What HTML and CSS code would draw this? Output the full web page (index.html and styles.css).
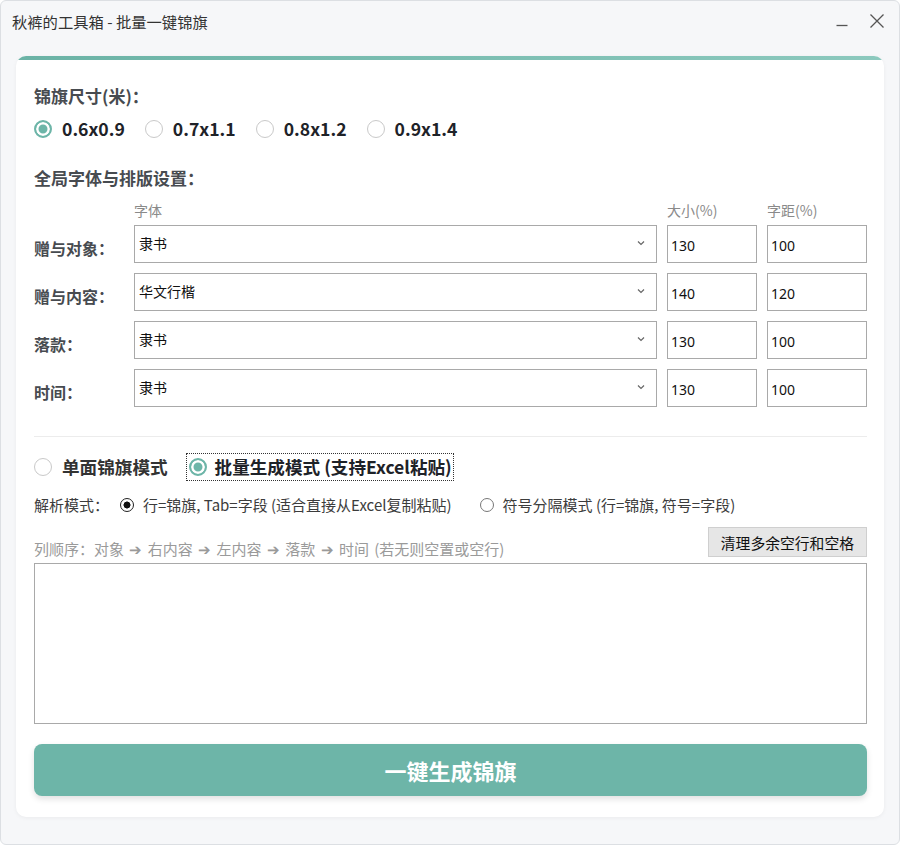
FILE: index.html
```html
<!DOCTYPE html>
<html lang="zh-CN">
<head>
    <meta charset="UTF-8">
    <meta name="viewport" content="width=device-width, initial-scale=1.0">
    <title>秋裤的工具箱 - 批量一键锦旗</title>
    <link rel="stylesheet" href="styles.css">
</head>
<body>
    <div class="window">
        <div class="titlebar">
            <span class="title">秋裤的工具箱 - 批量一键锦旗</span>
            <div class="win-btns">
                <svg class="win-btn" width="14" height="14" viewBox="0 0 14 14"><path d="M1.5 11.5h11" stroke="#555" stroke-width="1.3"/></svg>
                <svg class="win-btn" width="16" height="16" viewBox="0 0 16 16"><path d="M1.5 1.5l13 13M14.5 1.5l-13 13" stroke="#555" stroke-width="1.3"/></svg>
            </div>
        </div>

        <div class="card">
            <div class="card-bar"></div>
            <div class="card-body">
                <h2 class="heading">锦旗尺寸(米)：</h2>
                <div class="size-row">
                    <label class="opt"><input type="radio" name="size" class="radio" checked><span>0.6x0.9</span></label>
                    <label class="opt"><input type="radio" name="size" class="radio"><span>0.7x1.1</span></label>
                    <label class="opt"><input type="radio" name="size" class="radio"><span>0.8x1.2</span></label>
                    <label class="opt"><input type="radio" name="size" class="radio"><span>0.9x1.4</span></label>
                </div>

                <h2 class="heading heading-2">全局字体与排版设置：</h2>
                <div class="font-grid">
                    <span></span>
                    <span class="col-head">字体</span>
                    <span class="col-head">大小(%)</span>
                    <span class="col-head">字距(%)</span>

                    <span class="row-label">赠与对象：</span>
                    <div class="select"><span>隶书</span><svg width="10" height="10" viewBox="0 0 10 10"><path d="M2 3.5l3 3 3-3" fill="none" stroke="#666" stroke-width="1.2"/></svg></div>
                    <input class="num" value="130">
                    <input class="num" value="100">

                    <span class="row-label">赠与内容：</span>
                    <div class="select"><span>华文行楷</span><svg width="10" height="10" viewBox="0 0 10 10"><path d="M2 3.5l3 3 3-3" fill="none" stroke="#666" stroke-width="1.2"/></svg></div>
                    <input class="num" value="140">
                    <input class="num" value="120">

                    <span class="row-label">落款：</span>
                    <div class="select"><span>隶书</span><svg width="10" height="10" viewBox="0 0 10 10"><path d="M2 3.5l3 3 3-3" fill="none" stroke="#666" stroke-width="1.2"/></svg></div>
                    <input class="num" value="130">
                    <input class="num" value="100">

                    <span class="row-label">时间：</span>
                    <div class="select"><span>隶书</span><svg width="10" height="10" viewBox="0 0 10 10"><path d="M2 3.5l3 3 3-3" fill="none" stroke="#666" stroke-width="1.2"/></svg></div>
                    <input class="num" value="130">
                    <input class="num" value="100">
                </div>

                <hr class="divider">

                <div class="mode-row">
                    <label class="opt mode-opt"><input type="radio" name="mode" class="radio"><span>单面锦旗模式</span></label>
                    <label class="opt mode-opt focused"><input type="radio" name="mode" class="radio" checked><span>批量生成模式 (支持Excel粘贴)</span></label>
                </div>

                <div class="parse-row">
                    <span class="parse-label">解析模式：</span>
                    <label class="opt-sm"><input type="radio" name="parse" class="radio-sm" checked><span>行=锦旗, Tab=字段 (适合直接从Excel复制粘贴)</span></label>
                    <label class="opt-sm"><input type="radio" name="parse" class="radio-sm"><span>符号分隔模式 (行=锦旗, 符号=字段)</span></label>
                </div>

                <div class="order-row">
                    <span class="order-hint">列顺序：对象 ➔ 右内容 ➔ 左内容 ➔ 落款 ➔ 时间 (若无则空置或空行)</span>
                    <button class="btn-clean">清理多余空行和空格</button>
                </div>

                <textarea class="batch-input"></textarea>

                <button class="btn-generate">一键生成锦旗</button>
            </div>
        </div>
    </div>
</body>
</html>
```

FILE: styles.css
```css
* {
    box-sizing: border-box;
}

body {
    margin: 0;
    font-family: "Noto Sans CJK SC", "Noto Sans", sans-serif;
    background: #ffffff;
}

.window {
    width: 900px;
    height: 845px;
    background: #f6f7f9;
    border: 1px solid #dcdfe3;
    border-radius: 6px;
    display: flex;
    flex-direction: column;
}

.titlebar {
    height: 39px;
    display: flex;
    align-items: center;
    justify-content: space-between;
    padding: 0 14px 0 11px;
}

.title {
    font-size: 15.3px;
    color: #333;
}

.win-btns {
    display: flex;
    align-items: center;
    gap: 20px;
}

.win-btn {
    display: block;
}

.card {
    margin: 16px 15px 27px 15px;
    flex: 1;
    background: #fff;
    border-radius: 10px;
    overflow: hidden;
    box-shadow: 0 1px 4px rgba(0, 0, 0, 0.05);
}

.card-bar {
    height: 4px;
    background: linear-gradient(90deg, #6bb3a6, #8cc9be);
}

.card-body {
    padding: 24px 17px 0 18px;
}

.heading {
    margin: 0;
    font-size: 17px;
    line-height: 24px;
    font-weight: 700;
    color: #474b50;
}

.heading-2 {
    margin-top: 25px;
}

.opt {
    display: inline-flex;
    align-items: center;
    gap: 10px;
    cursor: pointer;
}

.radio {
    appearance: none;
    margin: 0;
    width: 18px;
    height: 18px;
    border: 1px solid #c9c9c9;
    border-radius: 50%;
    background: #fff;
    flex-shrink: 0;
}

.radio:checked {
    border: 2px solid #6db5a8;
    background: #6db5a8;
    box-shadow: inset 0 0 0 2.5px #fff;
}

.size-row {
    margin-top: 9px;
    display: flex;
    gap: 20px;
    font-size: 17.6px;
    line-height: 24px;
    font-weight: 700;
    color: #1e2228;
}

.font-grid {
    margin-top: 11px;
    display: grid;
    grid-template-columns: 90px 1fr 90px 100px;
    column-gap: 10px;
    row-gap: 10px;
}

.col-head {
    font-size: 14px;
    line-height: 18px;
    color: #8a8a8a;
    margin-bottom: -4px;
}

.row-label {
    font-size: 16px;
    font-weight: 700;
    color: #474b50;
    align-self: end;
    line-height: 30px;
}

.select {
    height: 38px;
    border: 1px solid #a9a9a9;
    display: flex;
    align-items: center;
    justify-content: space-between;
    padding: 0 10px 0 4px;
    font-size: 14px;
    color: #111;
}

.select span {
    margin-top: -2px;
}

.select svg {
    margin-top: -3px;
}

.num {
    height: 38px;
    border: 1px solid #a9a9a9;
    padding: 2px 3px 0;
    font-family: "Noto Sans", sans-serif;
    font-size: 14px;
    color: #111;
    width: 100%;
    outline: none;
}

.divider {
    margin: 29px 0 0;
    border: 0;
    border-top: 1px solid #ececec;
}

.mode-row {
    margin-top: 18px;
    display: flex;
    gap: 20px;
    font-size: 17.6px;
    line-height: 24px;
    font-weight: 700;
}

.mode-opt {
    gap: 10px;
    color: #1e2228;
}

.mode-opt:first-child {
    color: #333;
}

.focused {
    outline: 1px dotted #333;
    outline-offset: 1px;
    padding-left: 1px;
    gap: 8px;
}

.parse-row {
    margin-top: 16px;
    display: flex;
    align-items: center;
    font-size: 15px;
    line-height: 20px;
    color: #3c3c3c;
}

.parse-label {
    width: 86px;
}

.opt-sm {
    display: inline-flex;
    align-items: center;
    gap: 9px;
    margin-right: 28px;
}

.radio-sm {
    appearance: none;
    margin: 0;
    width: 14px;
    height: 14px;
    border: 1px solid #777;
    border-radius: 50%;
    background: #fff;
}

.radio-sm:checked {
    border-color: #222;
    background: radial-gradient(circle, #111 0 3.2px, #fff 3.8px);
}

.order-row {
    margin-top: 12px;
    display: flex;
    justify-content: space-between;
    align-items: flex-end;
}

.order-hint {
    font-size: 15px;
    line-height: 20px;
    color: #9a9a9a;
    margin-bottom: -2px;
    word-spacing: 2px;
}

.btn-clean {
    height: 30px;
    padding: 0 12px;
    background: #e6e6e6;
    border: 1px solid #cfcfcf;
    font-family: "Noto Sans CJK SC", sans-serif;
    font-size: 14.8px;
    color: #111;
}

.batch-input {
    display: block;
    width: 100%;
    height: 161px;
    margin-top: 6px;
    border: 1px solid #a9a9a9;
    resize: none;
    outline: none;
}

.btn-generate {
    display: block;
    width: 100%;
    height: 52px;
    margin-top: 20px;
    background: #6db5a8;
    border: none;
    border-radius: 8px;
    color: #fff;
    font-family: "Noto Sans CJK SC", sans-serif;
    font-size: 22px;
    font-weight: 700;
    box-shadow: 0 3px 6px rgba(0, 0, 0, 0.12);
}
```
